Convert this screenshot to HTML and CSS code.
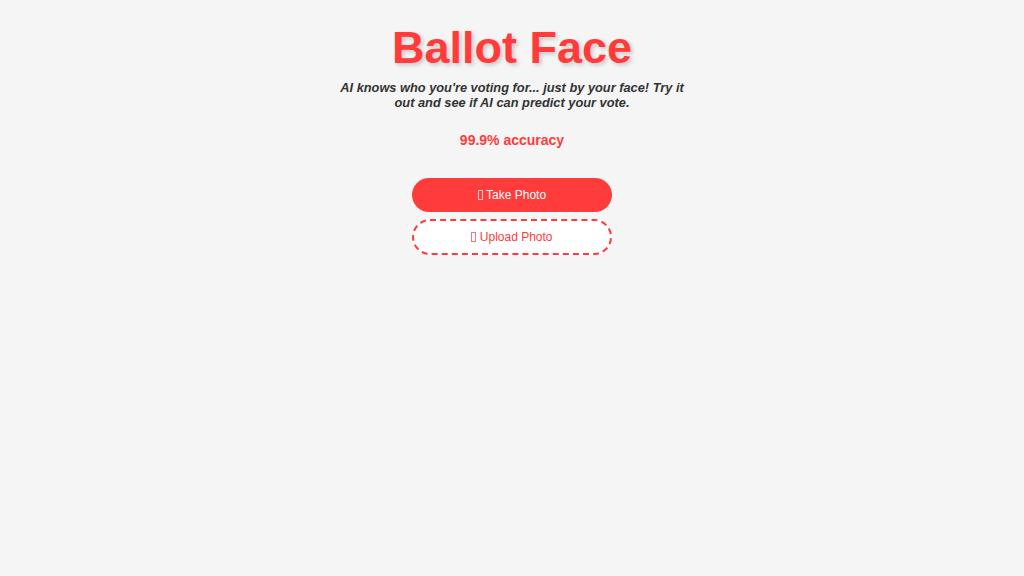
FILE: index.html
```html
<!DOCTYPE html>
<html lang="en">
<head>
    <meta charset="UTF-8">
    <meta name="viewport" content="width=device-width, initial-scale=1.0">
    <title>Ballot Face</title>
    <link rel="stylesheet" href="styles.css">
</head>
<body>
    <div class="container">
        <header>
            <h1>Ballot Face</h1>
            <p class="subtitle">AI knows who you're voting for... just by your face! Try it out and see if AI can predict your vote.</p>
        </header>

        <p class="accuracy">99.9% accuracy</p>

        <div class="button-container">
            <button class="button button-primary"><span class="icon"></span> Take Photo</button>
            <button class="button button-outline"><span class="icon"></span> Upload Photo</button>
        </div>
    </div>
</body>
</html>
```

FILE: styles.css
```css
body {
    font-family: "Liberation Sans", Arial, sans-serif;
    margin: 0;
    padding: 20px;
    background-color: #f5f5f5;
    color: #333;
}

.container {
    max-width: 350px;
    margin: 0 auto;
    text-align: center;
}

h1 {
    color: #ff3b3b;
    font-size: 45px;
    margin: 2px 0 0;
    line-height: 1.15;
    text-shadow: 2px 2px 4px rgba(0, 0, 0, 0.2);
}

.subtitle {
    font-size: 12.8px;
    font-weight: bold;
    font-style: italic;
    line-height: 15px;
    margin: 6px 0 0;
}

.accuracy {
    color: #ff3b3b;
    font-size: 14px;
    font-weight: bold;
    margin: 22px 0 0;
}

.button-container {
    display: flex;
    flex-direction: column;
    align-items: center;
    gap: 7px;
    margin-top: 30px;
}

.button {
    width: 200px;
    height: 34px;
    border-radius: 17px;
    font-family: "Liberation Sans", Arial, sans-serif;
    font-size: 12px;
    cursor: pointer;
}

.button-primary {
    background-color: #ff3b3b;
    color: white;
    border: none;
}

.button-outline {
    height: 36px;
    border-radius: 18px;
    background-color: white;
    color: #ff3b3b;
    border: 2px dashed #ff3b3b;
}

/* missing-glyph box, as the emoji showed without an emoji font */
.icon {
    display: inline-block;
    width: 3px;
    height: 8px;
    border: 1px solid currentColor;
    opacity: 0.7;
    vertical-align: -1px;
}
```
